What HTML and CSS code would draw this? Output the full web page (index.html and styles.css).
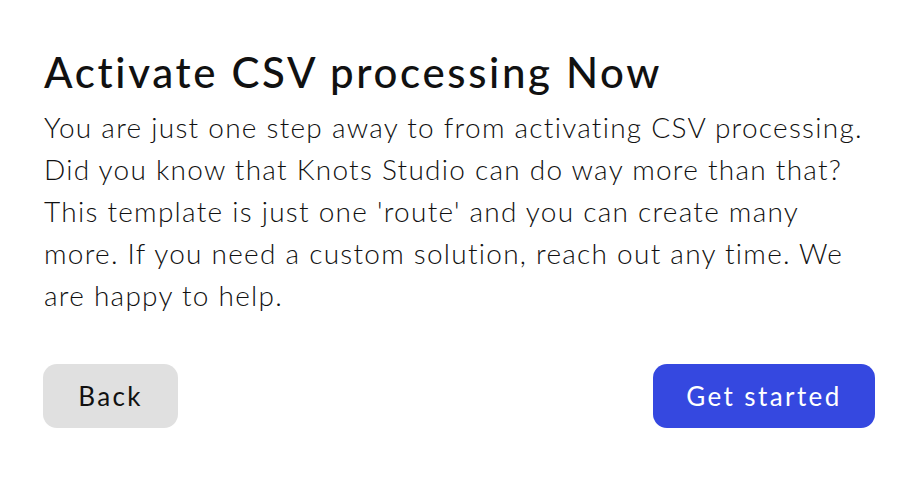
FILE: index.html
```html
<!DOCTYPE html>
<html>
<head>
<meta charset="utf-8">
<link rel="stylesheet" href="styles.css">
</head>
<body>
<main class="card">
  <h1 class="title">Activate CSV processing Now</h1>
  <p class="text">You are just one step away to from activating CSV processing.<br>Did you know that Knots Studio can do way more than that?<br>This template is just one 'route' and you can create many<br>more. If you need a custom solution, reach out any time. We<br>are happy to help.</p>
  <div class="actions">
    <button class="btn btn-back">Back</button>
    <button class="btn btn-primary">Get started</button>
  </div>
</main>
</body>
</html>
```
FILE: styles.css
```css
html, body {
  margin: 0;
  padding: 0;
  background: #ffffff;
}
.card {
  width: 920px;
  height: 496px;
  box-sizing: border-box;
  padding: 44px 45px 0 43px;
  font-family: "Lato", "Liberation Sans", sans-serif;
  color: #111111;
}
.title {
  margin: 0 0 0 1px;
  font-size: 42px;
  font-weight: 500;
  line-height: 56px;
  letter-spacing: 2.65px;
}
.text {
  margin: 6px 0 0 1px;
  font-size: 28px;
  font-weight: 300;
  line-height: 42px;
  letter-spacing: 1.26px;
  white-space: nowrap;
}
.actions {
  display: flex;
  justify-content: space-between;
  margin-top: 48px;
}
.btn {
  height: 64px;
  border: none;
  border-radius: 14px;
  font-family: inherit;
  font-size: 26px;
  font-weight: 400;
  letter-spacing: 2.4px;
  padding: 0;
}
.btn-back {
  width: 135px;
  background: #e0e0e0;
  color: #111111;
}
.btn-primary {
  width: 222px;
  background: #3548e0;
  color: #ffffff;
}
```
